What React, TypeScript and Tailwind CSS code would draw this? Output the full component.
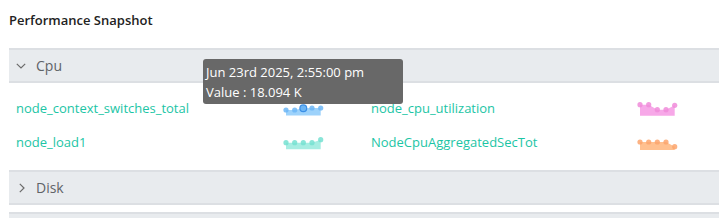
import React from "react";

type Pt = [number, number];

function Spark({
  pts,
  bottom,
  dot,
  fill,
  big,
  bigStroke,
}: {
  pts: Pt[];
  bottom: number;
  dot: string;
  fill: string;
  big?: number;
  bigStroke?: string;
}) {
  const line = pts.map((p) => `${p[0]},${p[1]}`).join(" L");
  const d = `M${pts[0][0]},${bottom} L${line} L${pts[pts.length - 1][0]},${bottom} Z`;
  return (
    <svg width="44" height="34" viewBox="0 0 44 34" className="block">
      <path d={d} fill={fill} />
      {pts.map((p, i) =>
        i === big ? null : (
          <circle key={i} cx={p[0]} cy={p[1]} r={2.6} fill={dot} fillOpacity={0.85} />
        )
      )}
      {big !== undefined && (
        <circle cx={pts[big][0]} cy={pts[big][1]} r={3.4} fill={dot} stroke={bigStroke} strokeWidth={1.2} />
      )}
    </svg>
  );
}

function Header({ label, open }: { label: string; open?: boolean }) {
  return (
    <div className="h-[35px] border-y-2 border-[#dcdfe3] bg-[#e8ebee] flex items-center pl-[7px]">
      <div className="w-[10px] flex justify-center">
        {open ? (
          <svg width="10" height="6" viewBox="0 0 10 6" className="block">
            <path d="M0.8 0.8 L5 5 L9.2 0.8" fill="none" stroke="#6b6b6b" strokeWidth="1.2" />
          </svg>
        ) : (
          <svg width="6" height="10" viewBox="0 0 6 10" className="block ml-[2px]">
            <path d="M0.8 0.8 L5 5 L0.8 9.2" fill="none" stroke="#6b6b6b" strokeWidth="1.2" />
          </svg>
        )}
      </div>
      <span className="ml-[10px] text-[14px] text-[#5f6368]">{label}</span>
    </div>
  );
}

export default function App() {
  const x = [3, 11.7, 20.3, 29, 37.7];
  return (
    <div
      className="relative w-[723px] h-[218px] overflow-hidden bg-white"
      style={{ fontFamily: '"Open Sans", "Noto Sans", sans-serif' }}
    >
      <div className="pl-[9px] w-[719px]">
        <div className="h-[48px] flex items-start pt-[10px]">
          <span className="text-[13px] font-semibold text-[#222] leading-[20px]">
            Performance Snapshot
          </span>
        </div>
        <Header label="Cpu" open />
        <div className="h-[87px] pt-[9px] pl-[7px]">
          <div className="flex h-[34px] items-center">
            <div className="w-[267px] text-[13px] text-[#1cc5a5]">node_context_switches_total</div>
            <div className="w-[88px]">
              <Spark
                pts={[[x[0], 18], [x[1], 18], [x[2], 16.3], [x[3], 16], [x[4], 16]]}
                bottom={23.5}
                dot="#6cb6f6"
                fill="#9dd2fb"
                big={2}
                bigStroke="#3a8ee6"
              />
            </div>
            <div className="w-[266px] text-[13px] text-[#1cc5a5]">node_cpu_utilization</div>
            <div>
              <Spark
                pts={[[x[0], 12.7], [x[1], 12.7], [x[2], 17.7], [x[3], 17.7], [x[4], 13.3]]}
                bottom={23.7}
                dot="#f08bd9"
                fill="#f7a8e8"
              />
            </div>
          </div>
          <div className="flex h-[34px] items-center">
            <div className="w-[267px] text-[13px] text-[#1cc5a5]">node_load1</div>
            <div className="w-[88px]">
              <Spark
                pts={[[x[0], 16.7], [x[1], 16.7], [x[2], 16.7], [x[3], 16.7], [x[4], 13.7]]}
                bottom={23.3}
                dot="#76e0d1"
                fill="#a6ede2"
              />
            </div>
            <div className="w-[266px] text-[13px] text-[#1cc5a5]">NodeCpuAggregatedSecTot</div>
            <div>
              <Spark
                pts={[[x[0], 16], [x[1], 16], [x[2], 16], [x[3], 16], [x[4], 20.7]]}
                bottom={24}
                dot="#fca56d"
                fill="#ffc08f"
              />
            </div>
          </div>
        </div>
        <Header label="Disk" />
        <div className="h-[7px]" />
        <div className="h-[35px] border-t-2 border-[#dcdfe3] bg-[#e8ebee]" />
      </div>
      <div className="absolute left-[203px] top-[59px] w-[200px] h-[45px] rounded-[3px] bg-[#686868] pl-[3px] pt-[3px] text-[13px] leading-[20px] text-white">
        <div>Jun 23rd 2025, 2:55:00 pm</div>
        <div>Value : 18.094 K</div>
      </div>
    </div>
  );
}
